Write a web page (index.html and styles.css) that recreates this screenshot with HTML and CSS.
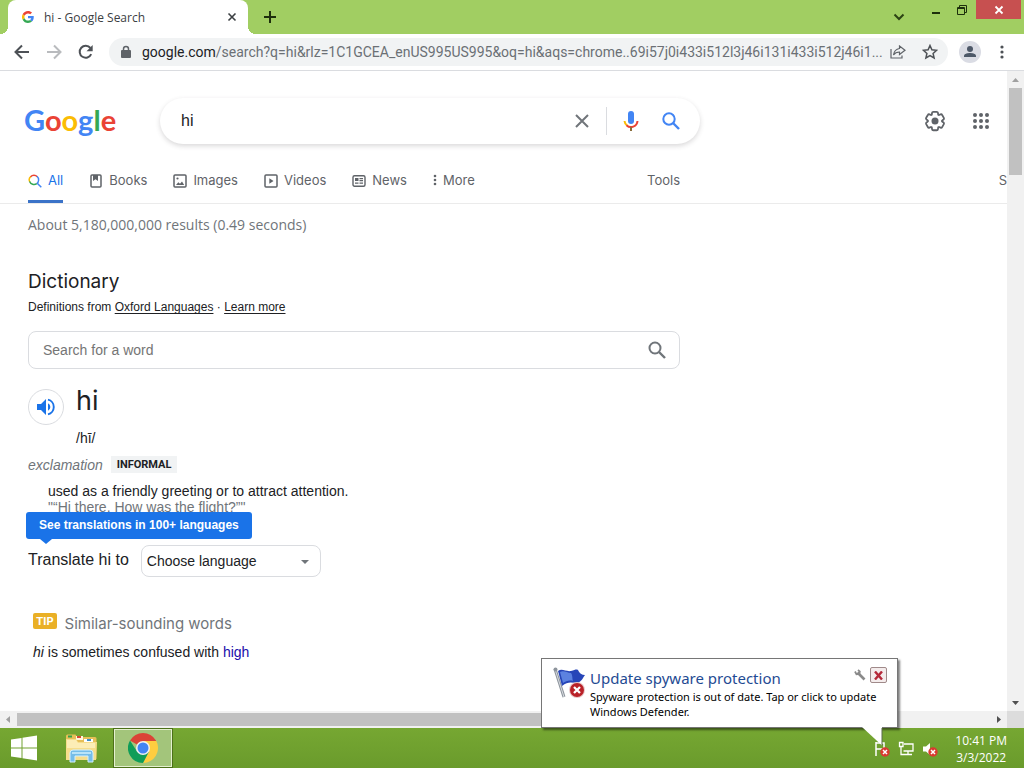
FILE: index.html
```html
<!DOCTYPE html>
<html lang="en">
<head>
<meta charset="utf-8">
<title>hi - Google Search</title>
<link rel="stylesheet" href="styles.css">
</head>
<body>
<div class="tabstrip">
  <div class="tab">
    <svg class="favicon" viewBox="0 0 48 48" width="12" height="12"><path fill="#EA4335" d="M24 9.500c3.540 0 6.710 1.220 9.210 3.600l6.850-6.850C35.900 2.380 30.470 0 24 0 14.620 0 6.510 5.380 2.560 13.220l7.980 6.190C12.430 13.720 17.740 9.500 24 9.500z"/><path fill="#4285F4" d="M46.980 24.550c0-1.570-.15-3.090-.38-4.550H24v9.020h12.940c-.58 2.960-2.260 5.480-4.780 7.180l7.730 6c4.510-4.180 7.090-10.360 7.090-17.650z"/><path fill="#FBBC05" d="M10.530 28.590A14.500 14.500 0 0 1 10.530 19.410l-7.980-6.190a24 24 0 0 0 0 21.560z"/><path fill="#34A853" d="M24 48c6.480 0 11.930-2.130 15.890-5.810l-7.730-6c-2.150 1.450-4.920 2.300-8.160 2.300-6.260 0-11.570-4.220-13.470-9.910l-7.980 6.190C6.510 42.620 14.620 48 24 48z"/></svg>
    <span class="tab-title">hi - Google Search</span>
    <button class="plain" aria-label="Close tab"><svg width="10" height="10" viewBox="0 0 10 10"><path d="M1.500 1.500l7 7m0-7l-7 7" stroke="#3c4043" stroke-width="1.600"/></svg></button>
  </div>
  <button class="plain new-tab" aria-label="New tab"><svg width="12" height="12" viewBox="0 0 12 12"><path d="M6 0v12M0 6h12" stroke="#1d2f0c" stroke-width="2"/></svg></button>
  <div class="window-controls">
    <button class="plain chevron" aria-label="Search tabs"><svg width="12" height="8" viewBox="0 0 12 8"><path d="M1.500 1.500L6 6l4.500-4.500" fill="none" stroke="#2c4314" stroke-width="2"/></svg></button>
    <button class="plain win" aria-label="Minimize"><svg width="10" height="12" viewBox="0 0 10 12"><path d="M1 9h8" stroke="#1d2f0c" stroke-width="2"/></svg></button>
    <button class="plain win" aria-label="Restore"><svg width="10" height="10" viewBox="0 0 10 10"><path d="M.5 2.500h7v7h-7zM2.500 2.500v-2h7v7h-2M.5 3.500h7" fill="none" stroke="#1d2f0c"/></svg></button>
    <button class="plain close" aria-label="Close"><svg width="10" height="10" viewBox="0 0 10 10"><path d="M1.500 1.500l7 7m0-7l-7 7" stroke="#fff" stroke-width="1.800"/></svg></button>
  </div>
</div>

<div class="toolbar">
  <button class="plain" aria-label="Back"><svg width="16" height="16" viewBox="0 0 16 16"><path d="M15 8H2M8 1.500L1.500 8 8 14.500" fill="none" stroke="#4d5156" stroke-width="2"/></svg></button>
  <button class="plain" aria-label="Forward"><svg width="16" height="16" viewBox="0 0 16 16"><path d="M1 8h13M8 1.500L14.500 8 8 14.500" fill="none" stroke="#b9bbbe" stroke-width="2"/></svg></button>
  <button class="plain" aria-label="Reload"><svg width="16" height="16" viewBox="0 0 16 16"><path d="M13.200 10.200A6 6 0 1 1 12.400 4" fill="none" stroke="#4d5156" stroke-width="2"/><path d="M14.700 1v6.200H8.500z" fill="#4d5156"/></svg></button>
  <div class="address">
    <svg width="10" height="14" viewBox="0 0 10 14"><path d="M2.500 6V4a2.500 2.500 0 0 1 5 0v2" fill="none" stroke="#5f6368" stroke-width="1.500"/><rect y="5" width="10" height="8" rx="1" fill="#5f6368"/></svg>
    <div class="url"><span class="host">google.com</span>/search?q=hi&amp;rlz=1C1GCEA_enUS995US995&amp;oq=hi&amp;aqs=chrome..69i57j0i433i512l3j46i131i433i512j46i1...</div>
    <button class="plain" aria-label="Share"><svg width="16" height="14" viewBox="0 0 16 14"><path d="M1 4v9h11v-2.500" fill="none" stroke="#5f6368" stroke-width="1.200"/><path d="M9.500 1L15 5.200 9.500 9.500V7C6.500 7 4.800 8 3.500 10 4 6.500 6 4 9.500 3.500z" fill="none" stroke="#5f6368" stroke-width="1.200"/></svg></button>
    <button class="plain star" aria-label="Bookmark"><svg width="16" height="16" viewBox="0 0 16 16"><path d="M8 1.500l1.900 4.300 4.700.5-3.500 3.100 1 4.600L8 11.600 3.900 14l1-4.600-3.500-3.100 4.700-.5z" fill="none" stroke="#4d5156" stroke-width="1.500"/></svg></button>
  </div>
  <button class="plain avatar" aria-label="Profile"><svg width="22" height="22" viewBox="0 0 22 22"><circle cx="11" cy="11" r="11" fill="#dadce4"/><circle cx="11" cy="8" r="3" fill="#4d5868"/><path d="M5 16v-1c0-2.200 3.500-3 6-3s6 .8 6 3v1z" fill="#4d5868"/></svg></button>
  <button class="plain" aria-label="Menu"><svg width="4" height="14" viewBox="0 0 4 14" fill="#4d5156"><circle cx="2" cy="2" r="1.600"/><circle cx="2" cy="7" r="1.600"/><circle cx="2" cy="12" r="1.600"/></svg></button>
</div>

<div class="view">
  <main class="page">
    <header class="header">
      <a href="#" class="logo" aria-label="Google"><span class="b">G</span><span class="r">o</span><span class="y">o</span><span class="b">g</span><span class="g">l</span><span class="r">e</span></a>
      <form class="search">
        <input type="text" value="hi" aria-label="Search">
        <button type="button" class="plain" aria-label="Clear"><svg width="14" height="14" viewBox="0 0 14 14"><path d="M1 1l12 12M13 1L1 13" stroke="#70757a" stroke-width="2"/></svg></button>
        <span class="divider"></span>
        <button type="button" class="plain mic" aria-label="Search by voice"><svg width="16" height="20" viewBox="0 0 16 20"><rect x="5" width="6" height="13" rx="3" fill="#4285f4"/><path d="M1.500 10A6.500 6.500 0 0 0 4 14.500" fill="none" stroke="#fbbc04" stroke-width="2"/><path d="M3.500 14.200A6.500 6.500 0 0 0 14.500 10" fill="none" stroke="#ea4335" stroke-width="2"/><path d="M8 16v4" stroke="#8a6d3b" stroke-width="2"/></svg></button>
        <button type="button" class="plain" aria-label="Google Search"><svg width="18" height="18" viewBox="0 0 18 18" fill="none" stroke="#4285f4" stroke-width="2"><circle cx="7" cy="7" r="5.700"/><path d="M11 11l6 6" stroke-width="2.400"/></svg></button>
      </form>
      <div class="header-tools">
        <button class="plain" aria-label="Settings"><svg width="24" height="24" viewBox="0 0 24 24"><path d="M13.850 22.250h-3.700c-.74 0-1.360-.54-1.450-1.270l-.27-1.890c-.27-.14-.53-.29-.79-.46l-1.800.72c-.7.260-1.470-.03-1.810-.65L2.200 15.530c-.35-.66-.2-1.440.36-1.880l1.530-1.190c-.01-.15-.02-.3-.02-.46 0-.15.010-.31.020-.46l-1.520-1.190c-.59-.45-.74-1.260-.37-1.880l1.850-3.190c.34-.62 1.110-.9 1.790-.63l1.810.73c.26-.17.520-.32.780-.46l.27-1.910c.09-.7.710-1.250 1.440-1.250h3.700c.74 0 1.360.54 1.450 1.270l.27 1.890c.27.140.530.290.79.460l1.800-.72c.71-.26 1.480.03 1.820.65l1.840 3.180c.36.660.200 1.440-.36 1.880l-1.520 1.190c.1.150.2.300.2.460s-.1.310-.2.460l1.520 1.190c.56.450.72 1.230.37 1.860l-1.860 3.220c-.34.620-1.110.9-1.800.63l-1.800-.72c-.26.170-.52.320-.78.460l-.27 1.910c-.1.680-.72 1.220-1.460 1.220z" fill="none" stroke="#5f6368" stroke-width="2" transform="translate(1.200 1.200) scale(.9)"/><circle cx="12" cy="12" r="3.500" fill="#5f6368"/></svg></button>
        <button class="plain" aria-label="Google apps"><svg width="16" height="16" viewBox="0 0 16 16" fill="#5f6368"><circle cx="2" cy="2" r="2"/><circle cx="8" cy="2" r="2"/><circle cx="14" cy="2" r="2"/><circle cx="2" cy="8" r="2"/><circle cx="8" cy="8" r="2"/><circle cx="14" cy="8" r="2"/><circle cx="2" cy="14" r="2"/><circle cx="8" cy="14" r="2"/><circle cx="14" cy="14" r="2"/></svg></button>
      </div>
    </header>

    <nav class="tabs">
      <div class="tabs-main">
        <a href="#" class="active"><svg width="14" height="14" viewBox="0 0 14 14" fill="none" stroke-width="1.500"><path d="M1.800 8A4.600 4.600 0 0 1 3 2.300" stroke="#fbbc04"/><path d="M2.600 2.700A4.700 4.700 0 0 1 9.300 2.700" stroke="#ea4335"/><path d="M9 2.300A4.700 4.700 0 0 1 8.500 9.800M9 9l4.300 4.300" stroke="#4285f4"/><path d="M1.600 7.500A4.700 4.700 0 0 0 8.700 9.700" stroke="#34a853"/></svg>All</a>
        <a href="#"><svg width="14" height="14" viewBox="0 0 14 14"><rect x="2" y="1" width="10" height="12" rx="1" fill="none" stroke="#5f6368" stroke-width="1.500"/><path d="M4 1h5v6L6.500 5.300 4 7z" fill="#5f6368"/></svg>Books</a>
        <a href="#"><svg width="14" height="14" viewBox="0 0 14 14"><rect x="1" y="1" width="12" height="12" rx="1" fill="none" stroke="#5f6368" stroke-width="1.500"/><path d="M3 11l2.300-2.700 1.700 1.400L9 7.500l2.200 3.500z" fill="#5f6368"/><circle cx="4.500" cy="4.500" r="1.100" fill="#5f6368"/></svg>Images</a>
        <a href="#"><svg width="14" height="14" viewBox="0 0 14 14"><rect x="1" y="1" width="12" height="12" rx="1" fill="none" stroke="#5f6368" stroke-width="1.500"/><path d="M5.300 4.200v5.600L9.500 7z" fill="#5f6368"/></svg>Videos</a>
        <a href="#"><svg width="14" height="14" viewBox="0 0 14 14"><rect x="1" y="1.700" width="12" height="10.600" rx="1.500" fill="none" stroke="#5f6368" stroke-width="1.400"/><path d="M3 4h3.500v3H3zM7.500 4H11v1.200H7.500zM7.500 6H11v1.200H7.500zM3 8.500h3.500v1.200H3zM7.500 8.500H11v1.200H7.500z" fill="#5f6368"/></svg>News</a>
        <a href="#" class="more"><svg width="4" height="12" viewBox="0 0 4 12" fill="#5f6368"><circle cx="2" cy="2" r="1.300"/><circle cx="2" cy="6" r="1.300"/><circle cx="2" cy="10" r="1.300"/></svg>More</a>
        <a href="#" class="tools">Tools</a>
      </div>
      <span class="edge">S</span>
    </nav>

    <div class="results">
      <p class="stats">About 5,180,000,000 results (0.49 seconds)</p>
      <h2 class="dict-title">Dictionary</h2>
      <p class="source">Definitions from <a href="#">Oxford Languages</a> · <a href="#">Learn more</a></p>
      <form class="word-search">
        <input type="text" placeholder="Search for a word" aria-label="Search for a word">
        <button type="button" class="plain" aria-label="Look up"><svg width="18" height="18" viewBox="0 0 18 18" fill="none" stroke="#70757a" stroke-width="2"><circle cx="7" cy="7" r="5.500"/><path d="M11 11l6 6" stroke-width="2.400"/></svg></button>
      </form>
      <div class="entry">
        <button class="plain speak" aria-label="Listen"><svg width="18" height="18" viewBox="0 0 18 18"><path d="M0 6v6h4l5 5V1L4 6z" fill="#1a73e8"/><path d="M11 5.300v7.400a4.100 4.100 0 0 0 0-7.400z" fill="#1a73e8"/><path d="M11 1.700a7.500 7.500 0 0 1 0 14.600" fill="none" stroke="#1a73e8" stroke-width="1.900"/></svg></button>
        <div>
          <div class="word">hi</div>
          <div class="phonetic">/hī/</div>
        </div>
      </div>
      <div class="pos"><i>exclamation</i><span class="label">INFORMAL</span></div>
      <div class="sense">
        <div>used as a friendly greeting or to attract attention.</div>
        <div class="example">"“Hi there. How was the flight?”"</div>
      </div>
      <div class="translate">
        <div class="tip-bubble">See translations in 100+ languages</div>
        <label for="lang">Translate hi to</label>
        <div class="select"><select id="lang"><option>Choose language</option></select></div>
      </div>
      <div class="similar"><span class="tip">TIP</span>Similar-sounding words</div>
      <p class="confused"><i>hi</i> is sometimes confused with <a href="#">high</a></p>
    </div>
  </main>
  <div class="vbar"><svg width="17" height="17" viewBox="0 0 17 17"><path d="M5 11l3.500-4 3.500 4z" fill="#a0a0a0"/></svg><div class="vthumb"></div><svg width="17" height="17" viewBox="0 0 17 17"><path d="M5 7l3.500 4L12 7z" fill="#505050"/></svg></div>
  <div class="hbar"><svg width="17" height="17" viewBox="0 0 17 17"><path d="M10 5L6 8.500l4 3.500z" fill="#a0a0a0"/></svg><div class="hthumb"></div><svg width="17" height="17" viewBox="0 0 17 17"><path d="M7 5l4 3.500L7 12z" fill="#505050"/></svg></div>
  <div class="corner"></div>
</div>

<footer class="taskbar">
  <button class="plain start" aria-label="Start"><svg width="28" height="26" viewBox="0 0 28 26" fill="#fff"><path d="M1 4.500L11.500 3v9.500H1zM12.500 2.800L27 .6v11.900H12.500zM1 13.500h10.500V23L1 21.500zM12.500 13.500H27v11.900L12.500 23.200z"/></svg></button>
  <button class="plain task" aria-label="File Explorer"><svg width="34" height="32" viewBox="0 0 34 32"><path d="M2 4q0-1.500 1.500-1.500h8L13 5h18q1.500 0 1.500 1.500V27H2z" fill="#e6bf58"/><path d="M4 3.500h4v2H4z" fill="#35a14b"/><path d="M12 4h7v4h-7z" fill="#fff6dc"/><path d="M13 4h4v2h-4z" fill="#d74832"/><path d="M20 7h9v3h-9z" fill="#fff"/><path d="M23 7h4v2h-4z" fill="#408fc7"/><path d="M2 7h10l2 3h19l-1 18H2z" fill="#f6dd8b"/><path d="M3 8h9l2 3h17v5H3z" fill="#fcedb6"/><path d="M6 30V21q0-3 3-3h17q3 0 3 3v9h-5v-6H11v6z" fill="#76bde8" stroke="#d2efff"/><path d="M8 20h19v2H8z" fill="#b9e3f8"/></svg></button>
  <button class="plain task running" aria-label="Google Chrome"><svg width="30" height="30" viewBox="0 0 30 30"><path d="M15 15L2.010 7.500A15 15 0 0 1 27.990 7.500L28 8H15z" fill="#db4437"/><path d="M15 8h13.300A15 15 0 0 1 15 30l6-11.500z" fill="#ffcd40"/><path d="M2 7.500A15 15 0 0 0 15 30l6-11.500L15 21l-6-2.500z" fill="#0f9d58"/><circle cx="15" cy="15" r="7" fill="#f1f1f1"/><circle cx="15" cy="15" r="5.500" fill="#4285f4"/></svg></button>
  <div class="tray">
    <svg width="16" height="16" viewBox="0 0 16 16"><path d="M2 1v14M2 2h8v6H2" fill="none" stroke="#fff" stroke-width="1.500"/><circle cx="11" cy="11" r="4.700" fill="#d93a30"/><path d="M9 9l4 4m0-4l-4 4" stroke="#fff" stroke-width="1.500"/></svg>
    <svg width="16" height="16" viewBox="0 0 16 16" fill="none" stroke="#fff" stroke-width="1.300"><path d="M6 3h9v7H5.500M10 10v3M6 13.500h8M1.500 1.500h3.500v4H1.500zM3 6v7.500h4"/></svg>
    <svg width="16" height="16" viewBox="0 0 16 16"><path d="M1 5.500h3L8 2v12l-4-3.500H1z" fill="#fff"/><circle cx="11" cy="11" r="4.700" fill="#d93a30"/><path d="M9 9l4 4m0-4l-4 4" stroke="#fff" stroke-width="1.500"/></svg>
  </div>
  <div class="clock"><span>10:41 PM</span><span>3/3/2022</span></div>
</footer>

<aside class="balloon">
  <svg width="34" height="32" viewBox="0 0 34 32"><path d="M2 2l9 28" stroke="#8d949c" stroke-width="3"/><path d="M2 2l9 28" stroke="#d9dde2"/><circle cx="2.500" cy="2.500" r="2" fill="#8d949c"/><path d="M5 4c4-3 8 1 13 0 4-1 5-2 7-1 1 3 4 5 7 5-2 2-3 7-8 8-5 0-9-2-15 3z" fill="#2746b8"/><path d="M7 5c4-2 7 1 11 1 2 3 1 6 2 8-4-1-7 0-10 2z" fill="#5c82e0"/><circle cx="24" cy="23" r="8" fill="#e8c7c7"/><circle cx="24" cy="23" r="7" fill="#b92128"/><path d="M21 20l6 6m0-6l-6 6" stroke="#fff" stroke-width="2.300"/></svg>
  <div class="balloon-text">
    <div class="balloon-head"><h3>Update spyware protection</h3>
      <button class="plain" aria-label="Options"><svg width="12" height="12" viewBox="0 0 12 12"><path d="M3.500 3.500l7 7" stroke="#8a8a8a" stroke-width="2.600"/><path d="M1 2.500l1.500 2.800 2.800-.3.500-2.500L4 1" fill="none" stroke="#8a8a8a" stroke-width="1.800"/></svg></button>
      <button class="plain dismiss" aria-label="Close notification"><svg width="9" height="9" viewBox="0 0 9 9"><path d="M1 .5l7 8m0-8l-7 8" stroke="#b5293a" stroke-width="2.400"/></svg></button>
    </div>
    <p>Spyware protection is out of date. Tap or click to update Windows Defender.</p>
  </div>
  <svg class="tail" width="22" height="19" viewBox="0 0 22 19"><path d="M0 0h20v18.500z" fill="#fff"/><path d="M20 1v17.500" stroke="#5b6b4a"/></svg>
</aside>
</body>
</html>
```
FILE: styles.css
```css
* { box-sizing: border-box; }
body {
  margin: 0;
  height: 100vh;
  display: flex;
  flex-direction: column;
  overflow: hidden;
  position: relative;
  font-family: "Liberation Sans", Arial, sans-serif;
  font-size: 14px;
  color: #202124;
  background: #fff;
}
p, h2, h3 { margin: 0; font-weight: 400; }
svg { display: block; flex: none; }
a { color: inherit; text-decoration: none; }
input, select { font: inherit; color: inherit; outline: 0; }
.plain {
  border: 0;
  padding: 0;
  background: none;
  display: flex;
  align-items: center;
  justify-content: center;
  flex: none;
}

/* Browser frame */
.tabstrip { display: flex; height: 34px; flex: none; background: #a1ce62; padding: 0 3px 0 8px; }
.tab {
  width: 240px;
  display: flex;
  align-items: center;
  gap: 10px;
  padding: 0 11px 0 14px;
  background: #fff;
  border-radius: 8px 8px 0 0;
  position: relative;
}
.tab::before, .tab::after { content: ""; position: absolute; bottom: 0; width: 8px; height: 8px; }
.tab::before { left: -8px; background: radial-gradient(circle at 0 0, transparent 8px, #fff 8px); }
.tab::after { right: -8px; background: radial-gradient(circle at 100% 0, transparent 8px, #fff 8px); }
.tab-title { flex: 1; font: 12px "Open Sans", sans-serif; color: #3c4043; }
.new-tab { margin-left: 16px; }
.window-controls { margin-left: auto; display: flex; align-items: flex-start; }
.chevron { width: 24px; height: 34px; }
.win { width: 26px; height: 19px; }
.chevron + .win { margin-left: 12px; }
.close { width: 45px; height: 19px; margin-left: 1px; background: #c75050; }
.toolbar {
  display: flex;
  align-items: center;
  gap: 16px;
  height: 37px;
  flex: none;
  padding: 0 20px 0 14px;
  border-bottom: 1px solid #dadce0;
}
.address {
  flex: 1;
  min-width: 0;
  height: 28px;
  margin-left: -1px;
  padding: 0 10px 0 12px;
  display: flex;
  align-items: center;
  gap: 11px;
  border-radius: 14px;
  background: #f1f3f4;
}
.url { flex: 1; min-width: 0; margin-right: -8px; overflow: hidden; white-space: nowrap; font: 14px Roboto, sans-serif; color: #6b7075; }
.host { color: #202124; }
.star { margin-left: 5px; }
.avatar { margin: 0 3px 0 -5px; }

/* Scrolling viewport */
.view { flex: 1; min-height: 0; display: grid; grid-template: minmax(0, 1fr) 17px / minmax(0, 1fr) 17px; }
.page { overflow: hidden; }
.vbar, .hbar { display: flex; background: #f1f1f1; }
.vbar { flex-direction: column; justify-content: space-between; grid-column: 2; grid-row: 1; }
.vthumb { height: 87px; margin: 0 2px auto; background: #c1c1c1; }
.hthumb { width: 66%; margin: 2px auto 2px 0; background: #c1c1c1; }
.corner { background: #dcdcdc; }

/* Search header */
.header { display: flex; align-items: center; height: 99px; padding: 0 18px 0 24px; }
.logo { width: 136px; padding-bottom: 2px; font: 700 29px/40px "Lato", sans-serif; }
.b { color: #4285f4; }
.r { color: #ea4335; }
.y { color: #fbbc05; }
.g { color: #34a853; }
.search {
  width: 540px;
  height: 46px;
  display: flex;
  align-items: center;
  padding: 0 20px 0 21px;
  border-radius: 23px;
  box-shadow: 0 2px 5px rgba(64, 60, 67, .2);
}
.search input { flex: 1; min-width: 0; border: 0; padding: 0; background: none; font-size: 16px; }
.divider { width: 1px; height: 28px; margin: 0 16px 0 17px; background: #dadce0; }
.mic { margin-right: 23px; }
.header-tools { margin-left: auto; display: flex; align-items: center; gap: 26px; }
.tabs {
  display: flex;
  justify-content: space-between;
  height: 34px;
  padding-left: 28px;
  border-bottom: 1px solid #ebebeb;
  font: 13px/20px "Inter", sans-serif;
  color: #5f6368;
}
.tabs-main { display: flex; gap: 26px; width: 652px; }
.tabs-main a { display: flex; align-items: flex-start; gap: 6px; }
.tabs-main svg { margin-top: 4px; }
.tabs-main .active { color: #1a73e8; border-bottom: 3px solid #3b73c8; }
.tabs-main .tools { margin-left: auto; }

/* Dictionary card */
.results { width: 680px; padding-left: 28px; }
.stats { margin-top: 11px; font: 14px/20px "Open Sans", sans-serif; color: #70757a; }
.dict-title { margin-top: 35px; font: 19px/24px "Inter", sans-serif; }
.source { margin-top: 5px; font-size: 12px; line-height: 16px; }
.source a { text-decoration: underline; text-underline-offset: 2px; }
.word-search {
  display: flex;
  align-items: center;
  height: 38px;
  margin-top: 16px;
  padding: 0 13px 0 14px;
  border: 1px solid #dadce0;
  border-radius: 8px;
}
.word-search input { flex: 1; border: 0; padding: 0; }
.word-search input::placeholder { color: #757575; opacity: 1; }
.entry { display: flex; gap: 12px; margin-top: 14px; }
.speak { width: 36px; height: 36px; margin-top: 6px; border: 1px solid #dadce0; border-radius: 50%; }
.word { font: 27px/36px "Inter", sans-serif; }
.phonetic { margin-top: 10px; line-height: 18px; }
.pos { display: flex; align-items: center; gap: 8px; margin-top: 9px; line-height: 16px; color: #70757a; }
.label { padding: 1px 6px 0; background: #f1f3f4; color: #202124; font: 700 11px/16px Roboto, sans-serif; }
.sense { margin-top: 10px; padding-left: 20px; line-height: 16px; }
.example { color: #70757a; }
.translate { position: relative; display: flex; gap: 12px; margin-top: 30px; font-size: 16px; }
.translate label { line-height: 29px; }
.tip-bubble {
  position: absolute;
  left: -2px;
  bottom: 38px;
  padding: 0 13px;
  border-radius: 3px;
  background: #1a73e8;
  color: #fff;
  font-size: 12px;
  font-weight: 700;
  line-height: 27px;
  white-space: nowrap;
}
.tip-bubble::after {
  content: "";
  position: absolute;
  left: 14px;
  top: 100%;
  border: 6px solid transparent;
  border-top: 5px solid #1a73e8;
  border-bottom: 0;
}
.select { position: relative; width: 180px; font-size: 14px; }
.select select {
  width: 100%;
  height: 32px;
  padding: 0 5px;
  appearance: none;
  background: #fff;
  border: 1px solid #dadce0;
  border-radius: 8px;
}
.select::after {
  content: "";
  position: absolute;
  right: 12px;
  top: 15px;
  border: 4px solid transparent;
  border-top-color: #70757a;
  border-bottom: 0;
}
.similar { display: flex; align-items: flex-start; gap: 8px; margin: 36px 0 0 5px; font: 15px/22px "Inter", sans-serif; color: #70757a; }
.tip { padding: 0 3px; border-radius: 2px; background: #eab026; color: #fff; font: 700 11px/16px "Inter", sans-serif; }
.confused { margin: 8px 0 0 5px; line-height: 18px; }
.confused a { color: #1a0dab; }

/* Desktop taskbar */
.taskbar {
  display: flex;
  align-items: center;
  flex: none;
  height: 40px;
  padding: 0 17px 0 10px;
  background: linear-gradient(#76a732, #6a9b2c);
}
.task { width: 58px; height: 38px; margin-left: 14px; }
.task + .task { margin-left: 4px; }
.running { background: #a3c57b; border: 1px solid #e4f0cf; outline: 1px solid #4c7019; outline-offset: 0; }
.tray { display: flex; gap: 8px; margin-left: auto; padding-top: 2px; }
.clock { display: flex; flex-direction: column; align-items: center; margin-left: 17px; padding-top: 2px; font: 12px/17px "Open Sans", sans-serif; color: #fff; }

/* Notification balloon */
.balloon {
  position: absolute;
  right: 126px;
  bottom: 40px;
  width: 357px;
  display: flex;
  gap: 3px;
  padding: 8px 10px 8px 11px;
  background: #fff;
  border: 1px solid #767676;
  box-shadow: 2px 2px 2px rgba(0, 0, 0, .5);
}
.balloon-text { flex: 1; font: 11px/15px "Noto Sans", sans-serif; color: #000; }
.balloon-head { display: flex; align-items: flex-start; gap: 4px; height: 22px; }
.balloon-head h3 { flex: 1; font: 15px/22px "Noto Sans", sans-serif; color: #1f4b93; }
.balloon-head .plain { height: 16px; }
.balloon-head .dismiss { width: 17px; background: #f4ecec; border: 1px solid #a08a8a; border-radius: 2px; }
.tail { position: absolute; top: 100%; right: 13px; }
```
